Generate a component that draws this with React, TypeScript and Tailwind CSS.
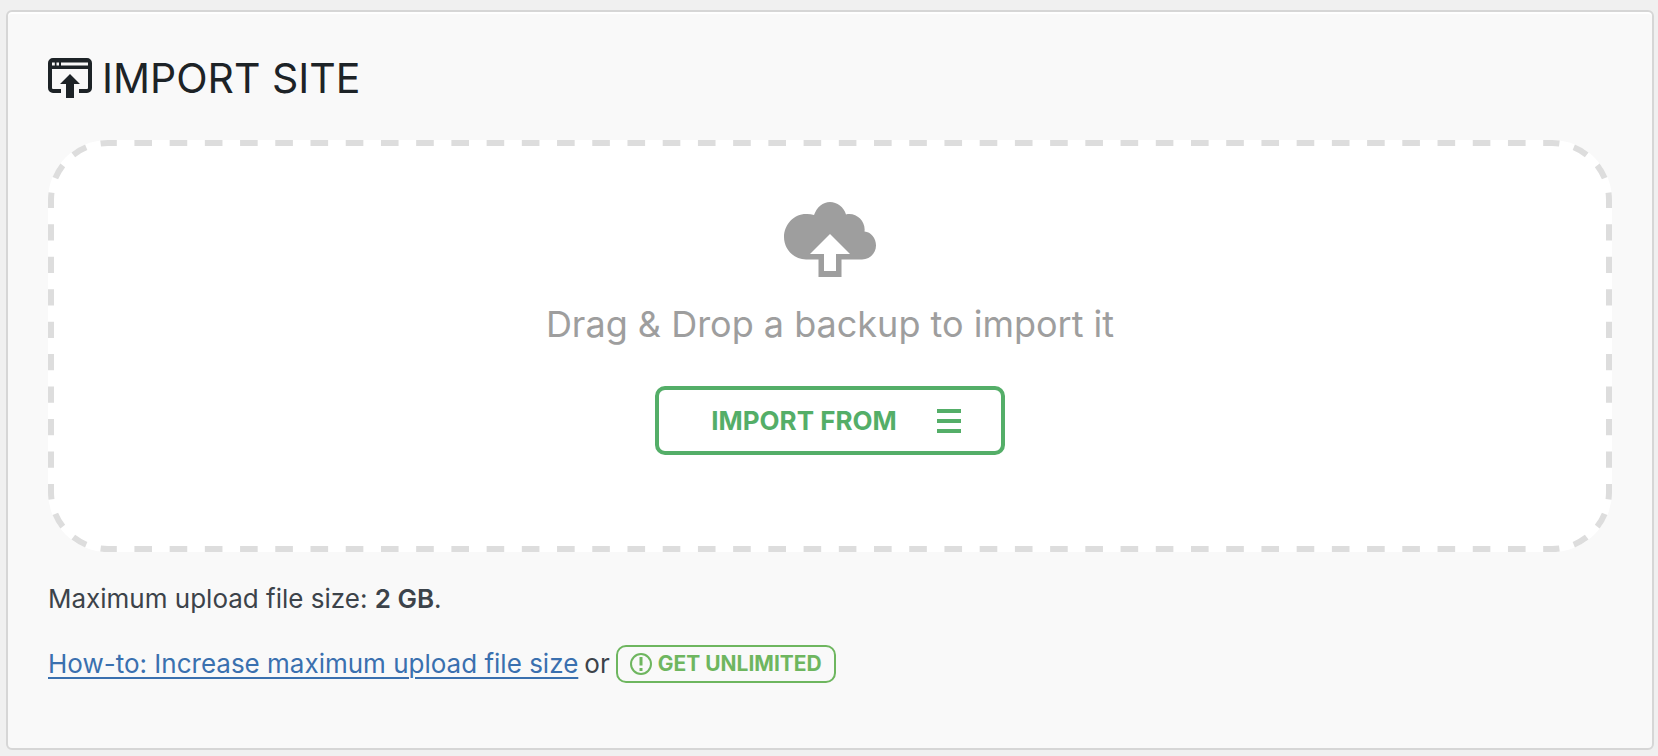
const ImportIcon = () => (
	<svg width="44" height="40" viewBox="0 0 44 40" fill="none" aria-hidden="true">
		<path
			d="M13 33H5a3 3 0 0 1-3-3V5a3 3 0 0 1 3-3h34a3 3 0 0 1 3 3v25a3 3 0 0 1-3 3h-8"
			stroke="currentColor"
			strokeWidth="4"
		/>
		<path d="M2 2h40v9H2z" fill="currentColor" />
		<path d="M4 4.500h2.800v3H4zM8.500 4.500h2.500v3H8.500zM13 4.500h27v3H13z" fill="#f9f9f9" />
		<path d="M22 16l10 10h-6v14h-8V26h-6z" fill="currentColor" />
	</svg>
);

const CloudIcon = () => (
	<svg width="92" height="76" viewBox="0 0 92 76" aria-hidden="true">
		<path
			d="M22 12a23 23 0 0 1 8 1C33 5 39 0 46 0s14 5 16 12.500C72 10 82 19 80.500 29.500 87 30 92 36 92 43.500 92 51 86 57.500 78 57.500H57.500V75h-23V57.500H22C10 57.500 0 47.500 0 35S10 12 22 12z"
			fill="currentColor"
		/>
		<path d="M46 32l20 20H52v17H40V52H26z" fill="#fff" />
	</svg>
);

const MenuIcon = () => (
	<svg width="24" height="24" viewBox="0 0 24 24" aria-hidden="true">
		<path d="M0 0h24v4H0zM0 10h24v4H0zM0 20h24v4H0z" fill="currentColor" />
	</svg>
);

const NoticeIcon = () => (
	<svg width="22" height="22" viewBox="0 0 22 22" fill="none" aria-hidden="true">
		<circle cx="11" cy="11" r="10" stroke="currentColor" strokeWidth="2" />
		<path d="M9.500 4h3v8.500h-3zM9.500 15h3v3h-3z" fill="currentColor" />
	</svg>
);

const sides = [
	{ className: "absolute top-0 left-[60px] h-1.5 w-[calc(100%-120px)]", x2: "100%", y2: "3", dashes: 41 },
	{ className: "absolute bottom-0 left-[60px] h-1.5 w-[calc(100%-120px)]", x2: "100%", y2: "3", dashes: 41 },
	{ className: "absolute top-[60px] left-0 h-[calc(100%-120px)] w-1.5", x2: "3", y2: "100%", dashes: 9 },
	{ className: "absolute top-[60px] right-0 h-[calc(100%-120px)] w-1.5", x2: "3", y2: "100%", dashes: 9 },
];

const corners = [
	"absolute top-0 left-0",
	"absolute top-0 right-0 rotate-90",
	"absolute right-0 bottom-0 rotate-180",
	"absolute bottom-0 left-0 -rotate-90",
];

// Every side and corner starts and ends on half a dash, so they join up
const DashedFrame = () => (
	<div className="pointer-events-none absolute inset-0 text-[#ddd]" aria-hidden="true">
		{sides.map(({ className, x2, y2, dashes }) => (
			<svg key={className} className={className}>
				<line
					x1={x2 === "3" ? "3" : "0"}
					y1={y2 === "3" ? "3" : "0"}
					x2={x2}
					y2={y2}
					pathLength={dashes * 2}
					stroke="currentColor"
					strokeWidth="6"
					strokeDasharray="1 1"
					strokeDashoffset="0.5"
				/>
			</svg>
		))}
		{corners.map((className) => (
			<svg key={className} className={className} width="60" height="60" fill="none">
				<path
					d="M3 60A57 57 0 0 1 60 3"
					pathLength={6}
					stroke="currentColor"
					strokeWidth="6"
					strokeDasharray="1 1"
					strokeDashoffset="0.5"
				/>
			</svg>
		))}
	</div>
);

export default function App() {
	return (
		<main className="min-h-screen bg-[#f0f0f0] pt-2.5 pr-1 pb-1.5 pl-1.5 font-['Inter',sans-serif] text-[#3c434a]">
			<section className="rounded-md border-2 border-[#d6d6d6] bg-[#f9f9f9] px-10 pt-[42px] pb-16 shadow-[inset_0_2px_0_#fff]">
				<h1 className="flex items-center gap-2.5 text-[41px] leading-12 font-normal text-[#1d2327]">
					<ImportIcon />
					IMPORT SITE
				</h1>

				<div className="relative mt-[38px] flex h-[412px] flex-col items-center rounded-[60px] bg-white pt-[62px] text-[#9e9e9e]">
					<DashedFrame />
					<CloudIcon />
					<p className="mt-[22px] text-4xl leading-12">
						Drag &amp; Drop a backup to import it
					</p>
					<button
						type="button"
						className="mt-[38px] flex items-center gap-10 rounded-[10px] border-4 border-[#54ae68] pt-[15px] pr-10 pb-3.5 pl-13 text-[26px] leading-8 font-bold text-[#54ae68]"
					>
						IMPORT FROM
						<MenuIcon />
					</button>
				</div>

				<p className="mt-[27px] text-[26px] leading-10">
					Maximum upload file size: <strong className="font-semibold">2 GB</strong>.
				</p>
				<p className="mt-[25px] flex items-center gap-1.5 text-[26px] leading-10">
					<a href="#" className="text-[#3a70af] underline decoration-2 underline-offset-4">
						How-to: Increase maximum upload file size
					</a>
					or
					<a
						href="#"
						className="flex h-[38px] items-center gap-1.5 rounded-[10px] border-2 border-[#6eb65f] px-3 text-[21px] font-bold text-[#6eb65f]"
					>
						<NoticeIcon />
						GET UNLIMITED
					</a>
				</p>
			</section>
		</main>
	);
}
